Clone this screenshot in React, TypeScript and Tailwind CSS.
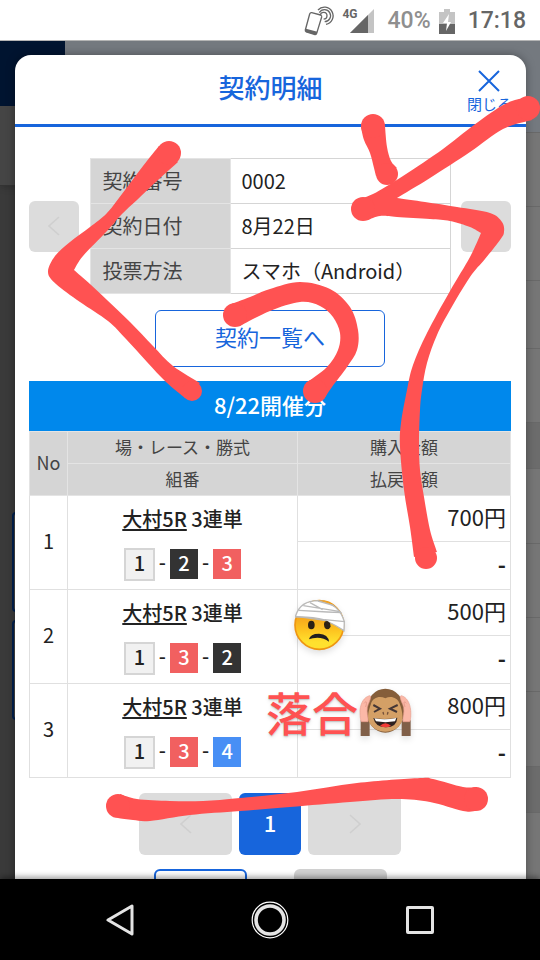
import { Fragment } from 'react';

interface Bet {
  no: number;
  race: string;
  type: string;
  picks: number[];
  amount: string;
  payout: string;
}

type Point = [number, number];

interface Stroke {
  edges: Point[][];
  caps: [number, number, number][];
}

const details = [
  { label: '契約番号', value: '0002' },
  { label: '契約日付', value: '8月22日' },
  { label: '投票方法', value: 'スマホ（Android）' },
];

const bets: Bet[] = [
  { no: 1, race: '大村5R', type: '3連単', picks: [1, 2, 3], amount: '700円', payout: '-' },
  { no: 2, race: '大村5R', type: '3連単', picks: [1, 3, 2], amount: '500円', payout: '-' },
  { no: 3, race: '大村5R', type: '3連単', picks: [1, 3, 4], amount: '800円', payout: '-' },
];

const boatColors: Record<number, string> = {
  1: 'h-[33px] w-[31px] border-2 border-[#d5d5d5] bg-[#f1f1f1] text-[#222]',
  2: 'h-[30px] w-7 bg-[#333] text-white',
  3: 'h-[30px] w-7 bg-[#f16060] text-white',
  4: 'h-[30px] w-7 bg-[#488ff5] text-white',
};

// Rows of the dimmed page on the right of the dialog
const backdropRows = [
  'h-[92px] bg-[#74797f]',
  'h-[74px] bg-[#767676]',
  'h-[74px] bg-[#767676]',
  'h-[68px] bg-[#767676]',
  'h-[74px] bg-[#767676]',
  'h-[46px] bg-[#6c6c6c]',
  'h-[75px] bg-[#767676]',
  'h-[74px] bg-[#767676]',
  'h-[74px] bg-[#767676]',
  'h-[75px] bg-[#767676]',
  'h-[46px] bg-[#6c6c6c]',
  'h-[74px] bg-[#767676]',
];

// Marker strokes: both edges of the brush, plus round ends
const strokes: Stroke[] = [
  {
    edges: [
      [[159, 146], [143, 166], [125, 190], [107, 213], [90, 227], [70, 242], [55, 256], [48, 272], [56, 284], [80, 302], [108, 321], [126, 339], [147, 362], [166, 382], [185, 398]],
      [[200, 383], [173, 366], [153, 346], [130, 322], [107, 300], [90, 284], [74, 270]],
      [[74, 270], [83, 256], [107, 231], [122, 214], [137, 200], [157, 181], [178, 162]],
    ],
    caps: [[169, 153, 12], [192, 391, 10]],
  },
  {
    edges: [
      [[229, 305], [250, 297], [270, 289], [300, 282], [330, 289], [350, 307], [358, 330], [357, 350], [347, 367], [332, 387], [324, 399]],
      [[306, 383], [327, 367], [338, 350], [340, 333], [333, 317], [320, 306], [300, 302], [270, 311], [240, 326]],
    ],
    caps: [[235, 315, 12], [315, 391, 12]],
  },
  {
    edges: [
      [[385, 126], [387, 147], [391, 161], [397, 168]],
      [[376, 176], [374, 168], [370, 153], [364, 140], [361, 127]],
    ],
    caps: [[373, 126, 12], [387, 174, 11]],
  },
  {
    edges: [
      [[523, 98], [503, 105], [470, 128], [443, 149], [403, 176], [373, 194], [355, 200]],
      [[368, 220], [380, 216], [397, 217], [430, 219], [450, 221], [470, 227], [481, 233]],
      [[481, 233], [470, 257], [450, 291], [427, 333], [413, 365], [407, 390], [401, 423], [400, 447], [404, 490], [410, 527], [414, 557]],
      [[437, 552], [430, 530], [424, 497], [420, 470], [419, 443], [420, 410], [422, 390], [427, 363], [437, 335], [450, 310], [470, 277], [485, 259], [500, 240], [504, 232], [502, 222], [490, 213], [457, 207], [425, 202], [397, 198]],
      [[397, 198], [430, 178], [470, 152], [503, 129], [532, 120]],
    ],
    caps: [[528, 108, 12], [363, 209, 12], [426, 558, 11]],
  },
  {
    edges: [
      [[120, 794], [137, 799], [170, 801], [203, 801], [240, 798], [297, 792], [357, 783], [420, 778], [433, 779], [463, 787], [477, 787]],
      [[476, 811], [463, 811], [430, 802], [397, 799], [350, 802], [290, 807], [240, 811], [190, 815], [150, 821], [133, 820], [118, 818]],
    ],
    caps: [[118, 806, 12], [476, 799, 12]],
  },
];

// Catmull-Rom spline through the points, written as cubic beziers
function spline(points: Point[]) {
  return points
    .slice(1)
    .map(([x, y], i) => {
      const before = points[Math.max(i - 1, 0)];
      const from = points[i];
      const after = points[Math.min(i + 2, points.length - 1)];
      const c1 = [from[0] + (x - before[0]) / 6, from[1] + (y - before[1]) / 6];
      const c2 = [x - (after[0] - from[0]) / 6, y - (after[1] - from[1]) / 6];
      return `C${c1[0]} ${c1[1]} ${c2[0]} ${c2[1]} ${x} ${y}`;
    })
    .join('');
}

function outline(edges: Point[][]) {
  return edges.map((edge, i) => `${i === 0 ? 'M' : 'L'}${edge[0][0]} ${edge[0][1]}${spline(edge)}`).join('') + 'Z';
}

function Chevron({ flip = false }: { flip?: boolean }) {
  return (
    <svg viewBox="0 0 12 20" className="h-5 w-3" fill="none" stroke="#cfcfcf" strokeWidth="1.6" aria-hidden="true">
      <path d={flip ? 'M1 1l10 9-10 9' : 'M11 1L1 10l10 9'} />
    </svg>
  );
}

function StatusBar() {
  return (
    <header className="flex h-[41px] shrink-0 items-center justify-end border-b border-[#b5b5b5] bg-white pt-0.5 pr-[14px] font-['Roboto',sans-serif] text-[23px] font-medium">
      <svg viewBox="0 0 90 90" className="mr-2 h-[30px] w-[30px]" fill="none" stroke="#666" aria-hidden="true">
        <path d="M23 20 L50 27 Q54 29 53 33 L38 82 Q36 87 31 85 L7 78 Q3 76 4 72 L17 24 Q19 19 23 20Z" strokeWidth="4" />
        <path d="M6 68 L40 77 L36 87 L5 78Z" fill="#666" stroke="none" />
        <path d="M42 12 A26 26 0 1 1 66 55" strokeWidth="4" />
        <path d="M46 20 A18 18 0 1 1 62 47" strokeWidth="4" />
        <path d="M49 28 A10 10 0 1 1 59 39" strokeWidth="4" />
      </svg>
      <span className="self-start pt-1.5 text-xs leading-3 font-bold text-[#666]">4G</span>
      <svg viewBox="0 0 24 24" className="mr-[14px] -ml-2 h-6 w-6" aria-hidden="true">
        <path d="M0 24L24 0v24z" fill="#c4c4c4" />
        <path d="M0 24L18 6v18z" fill="#666" />
      </svg>
      <span className="text-[#8f8f8f]">40%</span>
      <svg viewBox="0 0 16 25" className="mr-[13px] ml-2 h-[25px] w-4" aria-hidden="true">
        <path d="M5 0h6v3h5v13H0V3h5z" fill="#c4c4c4" />
        <path d="M0 15h16v10H0z" fill="#666" />
        <path d="M10 5L4 14h4l-1 8 5-9H9z" fill="#fff" />
      </svg>
      <span className="text-[#666]">17:18</span>
    </header>
  );
}

function Backdrop() {
  return (
    <div className="absolute inset-0 flex justify-between overflow-hidden bg-[#74797f]" aria-hidden="true">
      <div className="flex w-[65px] flex-col bg-[#3a3a3a]">
        <div className="h-[65px] bg-[#001430]" />
        <div className="h-20 w-5 border-b border-[#333] bg-[#454545] shadow-md" />
        <div className="mt-[326px] ml-3 h-[100px] rounded-l border-2 border-[#001f4d] bg-[#444]" />
        <div className="mt-2 ml-3 h-[100px] rounded-l border-2 border-[#001f4d] bg-[#444]" />
      </div>
      <div className="w-5">
        {backdropRows.map((row, i) => (
          <div key={i} className={`border-b border-[#696969] ${row}`} />
        ))}
      </div>
    </div>
  );
}

function ContractInfo() {
  return (
    <div className="flex items-center justify-between">
      <button type="button" aria-label="前の契約" className="flex h-[51px] w-[50px] items-center justify-center rounded-md bg-[#dcdcdc]">
        <Chevron />
      </button>
      <table className="w-[361px] border-collapse text-xl">
        <tbody>
          {details.map((item) => (
            <tr key={item.label} className="h-[45px]">
              <th scope="row" className="w-[140px] border border-[#e4e4e4] bg-[#d5d5d5] px-3 text-left font-normal text-[#444]">
                {item.label}
              </th>
              <td className="border border-[#d5d5d5] px-[11px] text-[#222]">{item.value}</td>
            </tr>
          ))}
        </tbody>
      </table>
      <button type="button" aria-label="次の契約" className="flex h-[51px] w-[50px] items-center justify-center rounded-md bg-[#dcdcdc]">
        <Chevron flip />
      </button>
    </div>
  );
}

function BetTable() {
  return (
    <table className="w-full table-fixed border-collapse text-center text-xl text-[#222]">
      <colgroup>
        <col className="w-[38px]" />
        <col className="w-[230px]" />
        <col />
      </colgroup>
      <thead className="bg-[#d5d5d5] text-[17px] text-[#444]">
        <tr className="h-8">
          <th rowSpan={2} className="border border-[#e4e4e4] pb-1 text-lg font-normal">No</th>
          <th className="border border-[#e4e4e4] pb-0.5 font-normal">場・レース・勝式</th>
          <th className="border border-[#e4e4e4] pb-0.5 font-normal">購入金額</th>
        </tr>
        <tr className="h-8">
          <th className="border border-[#e4e4e4] pb-0.5 font-normal">組番</th>
          <th className="border border-[#e4e4e4] pb-0.5 font-normal">払戻金額</th>
        </tr>
      </thead>
      <tbody>
        {bets.map((bet) => (
          <Fragment key={bet.no}>
            <tr className="h-[46px]">
              <td rowSpan={2} className="border border-[#e0e0e0] pb-1">{bet.no}</td>
              <td rowSpan={2} className="border border-[#e0e0e0]">
                <div className="font-medium">
                  <a href="#race" className="underline decoration-2 underline-offset-2">{bet.race}</a> {bet.type}
                </div>
                <div className="mt-[15px] flex items-center justify-center gap-1 font-medium">
                  {bet.picks.map((pick, i) => (
                    <Fragment key={pick}>
                      {i > 0 && <span className="pb-1">-</span>}
                      <span className={`flex items-center justify-center pb-0.5 leading-none ${boatColors[pick]}`}>{pick}</span>
                    </Fragment>
                  ))}
                </div>
              </td>
              <td className="border border-[#e0e0e0] pr-1 pb-1 text-right text-[22px]">{bet.amount}</td>
            </tr>
            <tr className="h-12">
              <td className="border border-[#e0e0e0] pr-1 pb-1 text-right text-[22px] font-bold">{bet.payout}</td>
            </tr>
          </Fragment>
        ))}
      </tbody>
    </table>
  );
}

function InjuredFace() {
  return (
    <svg viewBox="120 50 180 180" className="absolute top-[597px] left-[290px] h-[60px] w-[60px] drop-shadow-md" aria-hidden="true">
      <defs>
        <linearGradient id="face" x1="0" y1="0" x2="0" y2="1">
          <stop offset="0.3" stopColor="#f5a21c" />
          <stop offset="0.6" stopColor="#fdc21f" />
          <stop offset="0.85" stopColor="#ffe12e" />
        </linearGradient>
      </defs>
      <circle cx="208" cy="134" r="73" fill="url(#face)" stroke="#ee9612" strokeWidth="5" />
      <path d="M137 106 C147 75 172 61 204 61 C248 66 272 86 283 124 L282 151 C270 143 248 130 224 119 C195 111 165 109 137 110Z" fill="#fff" stroke="#bababa" strokeWidth="4" />
      <path d="M202 60 Q232 61 252 74 Q232 70 202 60Z" fill="#f5a21c" />
      <path d="M146 90 L232 95 L275 97 M160 76 L272 94 M180 67 L218 88 M204 62 L252 76 M224 118 L284 124 M138 108 L230 121" fill="none" stroke="#bababa" strokeWidth="4" />
      <ellipse cx="184" cy="134" rx="10" ry="13" fill="#2d2115" />
      <path d="M222 132 Q222 122 232 122 L240 128 L242 139 Q238 147 231 147 Q222 145 222 132Z" fill="#2d2115" />
      <path d="M177 177 Q180 160 207 160 Q235 162 237 184 Q222 172 202 172 Q187 172 177 177Z" fill="#211d20" />
    </svg>
  );
}

function MonkeyFace() {
  return (
    <svg viewBox="325 325 165 165" className="h-[55px] w-[55px] drop-shadow-md" aria-hidden="true">
      <path d="M333 428h27v47h-27zM456 428h27v47h-27z" fill="#805f48" />
      <ellipse cx="407" cy="399" rx="57" ry="66" fill="#855e3a" />
      <path d="M407 362 C390 354 370 359 364 378 C356 400 353 416 357 431 C367 453 388 462 407 462 C427 462 448 453 457 431 C461 416 457 396 450 378 C443 359 423 354 407 362Z" fill="#d4a066" />
      <path d="M360 354 C343 358 333 376 331 398 C331 414 332 427 335 432 L355 432 C356 419 350 404 353 389 C356 376 363 368 363 356Z M455 354 C471 358 481 376 483 398 C484 414 483 427 480 432 L460 432 C459 419 465 404 462 389 C459 376 451 368 452 356Z" fill="#fbb8a7" stroke="#e79d8c" strokeWidth="2" />
      <path d="M343 377 C350 369 353 371 348 388 M470 377 C463 369 461 372 466 388" fill="none" stroke="#e79d8c" strokeWidth="3" />
      <path d="M371 382 L391 393 L373 403 M444 382 L421 393 L442 403" fill="none" stroke="#453736" strokeWidth="6" />
      <path d="M400 403 L402 411 M415 403 L413 411" stroke="#74503a" strokeWidth="4" />
      <path d="M371 421 Q407 428 443 420 Q441 450 407 449 Q377 448 371 421Z" fill="#2e211f" />
      <path d="M374 422 Q407 428 440 421 L436 431 Q407 436 379 431Z" fill="#fff" />
      <path d="M391 444 Q407 429 424 444 Q407 454 391 444Z" fill="#f13c37" />
    </svg>
  );
}

function Scribble() {
  return (
    <svg viewBox="0 0 540 960" className="pointer-events-none absolute inset-0 h-full w-full" fill="#ff5252" aria-hidden="true">
      {strokes.map((stroke, i) => (
        <g key={i}>
          <path d={outline(stroke.edges)} />
          {stroke.caps.map(([cx, cy, r]) => (
            <circle key={cx} cx={cx} cy={cy} r={r} />
          ))}
        </g>
      ))}
    </svg>
  );
}

function NavBar() {
  return (
    <nav className="relative grid h-[81px] shrink-0 grid-cols-3 items-center justify-items-center bg-black px-[45px] shadow-[0_-2px_6px_rgba(0,0,0,0.4)]">
      <button type="button" aria-label="戻る">
        <svg viewBox="0 0 32 32" className="h-8 w-8" fill="none" stroke="#e4e4e4" strokeWidth="3" strokeLinejoin="round">
          <path d="M28 2v28L4 16z" />
        </svg>
      </button>
      <button type="button" aria-label="ホーム">
        <svg viewBox="0 0 38 38" className="h-[38px] w-[38px]" fill="none">
          <circle cx="19" cy="19" r="17.8" stroke="#fff" strokeWidth="1.2" />
          <circle cx="19" cy="19" r="14" stroke="#e4e4e4" strokeWidth="3.6" />
        </svg>
      </button>
      <button type="button" aria-label="アプリ履歴">
        <svg viewBox="0 0 28 28" className="h-7 w-7" fill="none" stroke="#e4e4e4" strokeWidth="3" strokeLinejoin="round">
          <rect x="1.5" y="1.5" width="25" height="25" rx="0.5" />
        </svg>
      </button>
    </nav>
  );
}

export default function App() {
  return (
    <div className="relative flex h-screen flex-col overflow-hidden bg-black font-['Noto_Sans_CJK_JP',sans-serif]">
      <StatusBar />

      <main className="relative min-h-0 flex-1 overflow-hidden">
        <Backdrop />

        {/* Contract dialog */}
        <section role="dialog" aria-labelledby="dialog-title" className="relative mt-[14px] mr-[14px] ml-[15px] rounded-t-2xl bg-white pb-10 shadow-[0_0_10px_rgba(0,0,0,0.35)]">
          <div className="relative flex h-[72px] items-center justify-center border-b-3 border-[#1765dc] pb-1.5 text-[#1765dc]">
            <h1 id="dialog-title" className="text-[26px] leading-8 font-medium">契約明細</h1>
            <button type="button" className="absolute top-[14px] right-[14px] flex flex-col items-center text-[15px] leading-[22px]">
              <svg viewBox="0 0 24 24" className="h-6 w-6" fill="none" stroke="#1765dc" strokeWidth="2" aria-hidden="true">
                <path d="M2 2l20 20M22 2L2 22" />
              </svg>
              閉じる
            </button>
          </div>

          <div className="pt-[31px] pr-[15px] pl-[14px]">
            <ContractInfo />

            <button type="button" className="mx-auto mt-4 block h-[57px] w-[230px] rounded-md border border-[#1765dc] pb-1 text-[22px] text-[#1765dc]">
              契約一覧へ
            </button>

            <h2 className="mt-[14px] h-[50px] bg-[#0088ec] text-center text-[22px] leading-[46px] font-medium text-white">
              8/22開催分
            </h2>
            <BetTable />

            <div className="mt-[15px] flex justify-center gap-[7px]">
              <button type="button" aria-label="前のページ" className="flex h-[62px] w-[93px] items-center justify-center rounded-md bg-[#dcdcdc]">
                <Chevron />
              </button>
              <button type="button" className="h-[62px] w-[62px] rounded-md bg-[#1765dc] pb-1 text-[22px] font-medium text-white">1</button>
              <button type="button" aria-label="次のページ" className="flex h-[62px] w-[93px] items-center justify-center rounded-md bg-[#dcdcdc]">
                <Chevron flip />
              </button>
            </div>

            <div className="mt-[14px] flex justify-center gap-[47px]">
              <button type="button" aria-label="先頭へ" className="h-[62px] w-[93px] rounded-md border-2 border-[#1765dc]" />
              <button type="button" aria-label="末尾へ" className="h-[62px] w-[93px] rounded-md bg-[#d0d0d0]" />
            </div>
          </div>
        </section>
      </main>

      <NavBar />

      <Scribble />
      <InjuredFace />
      <div className="absolute top-[684px] left-[266px] flex items-center text-[46px] leading-[54px] text-[#ff5252] text-shadow-md">
        <span className="pb-1 font-medium">落合</span>
        <MonkeyFace />
      </div>
    </div>
  );
}
